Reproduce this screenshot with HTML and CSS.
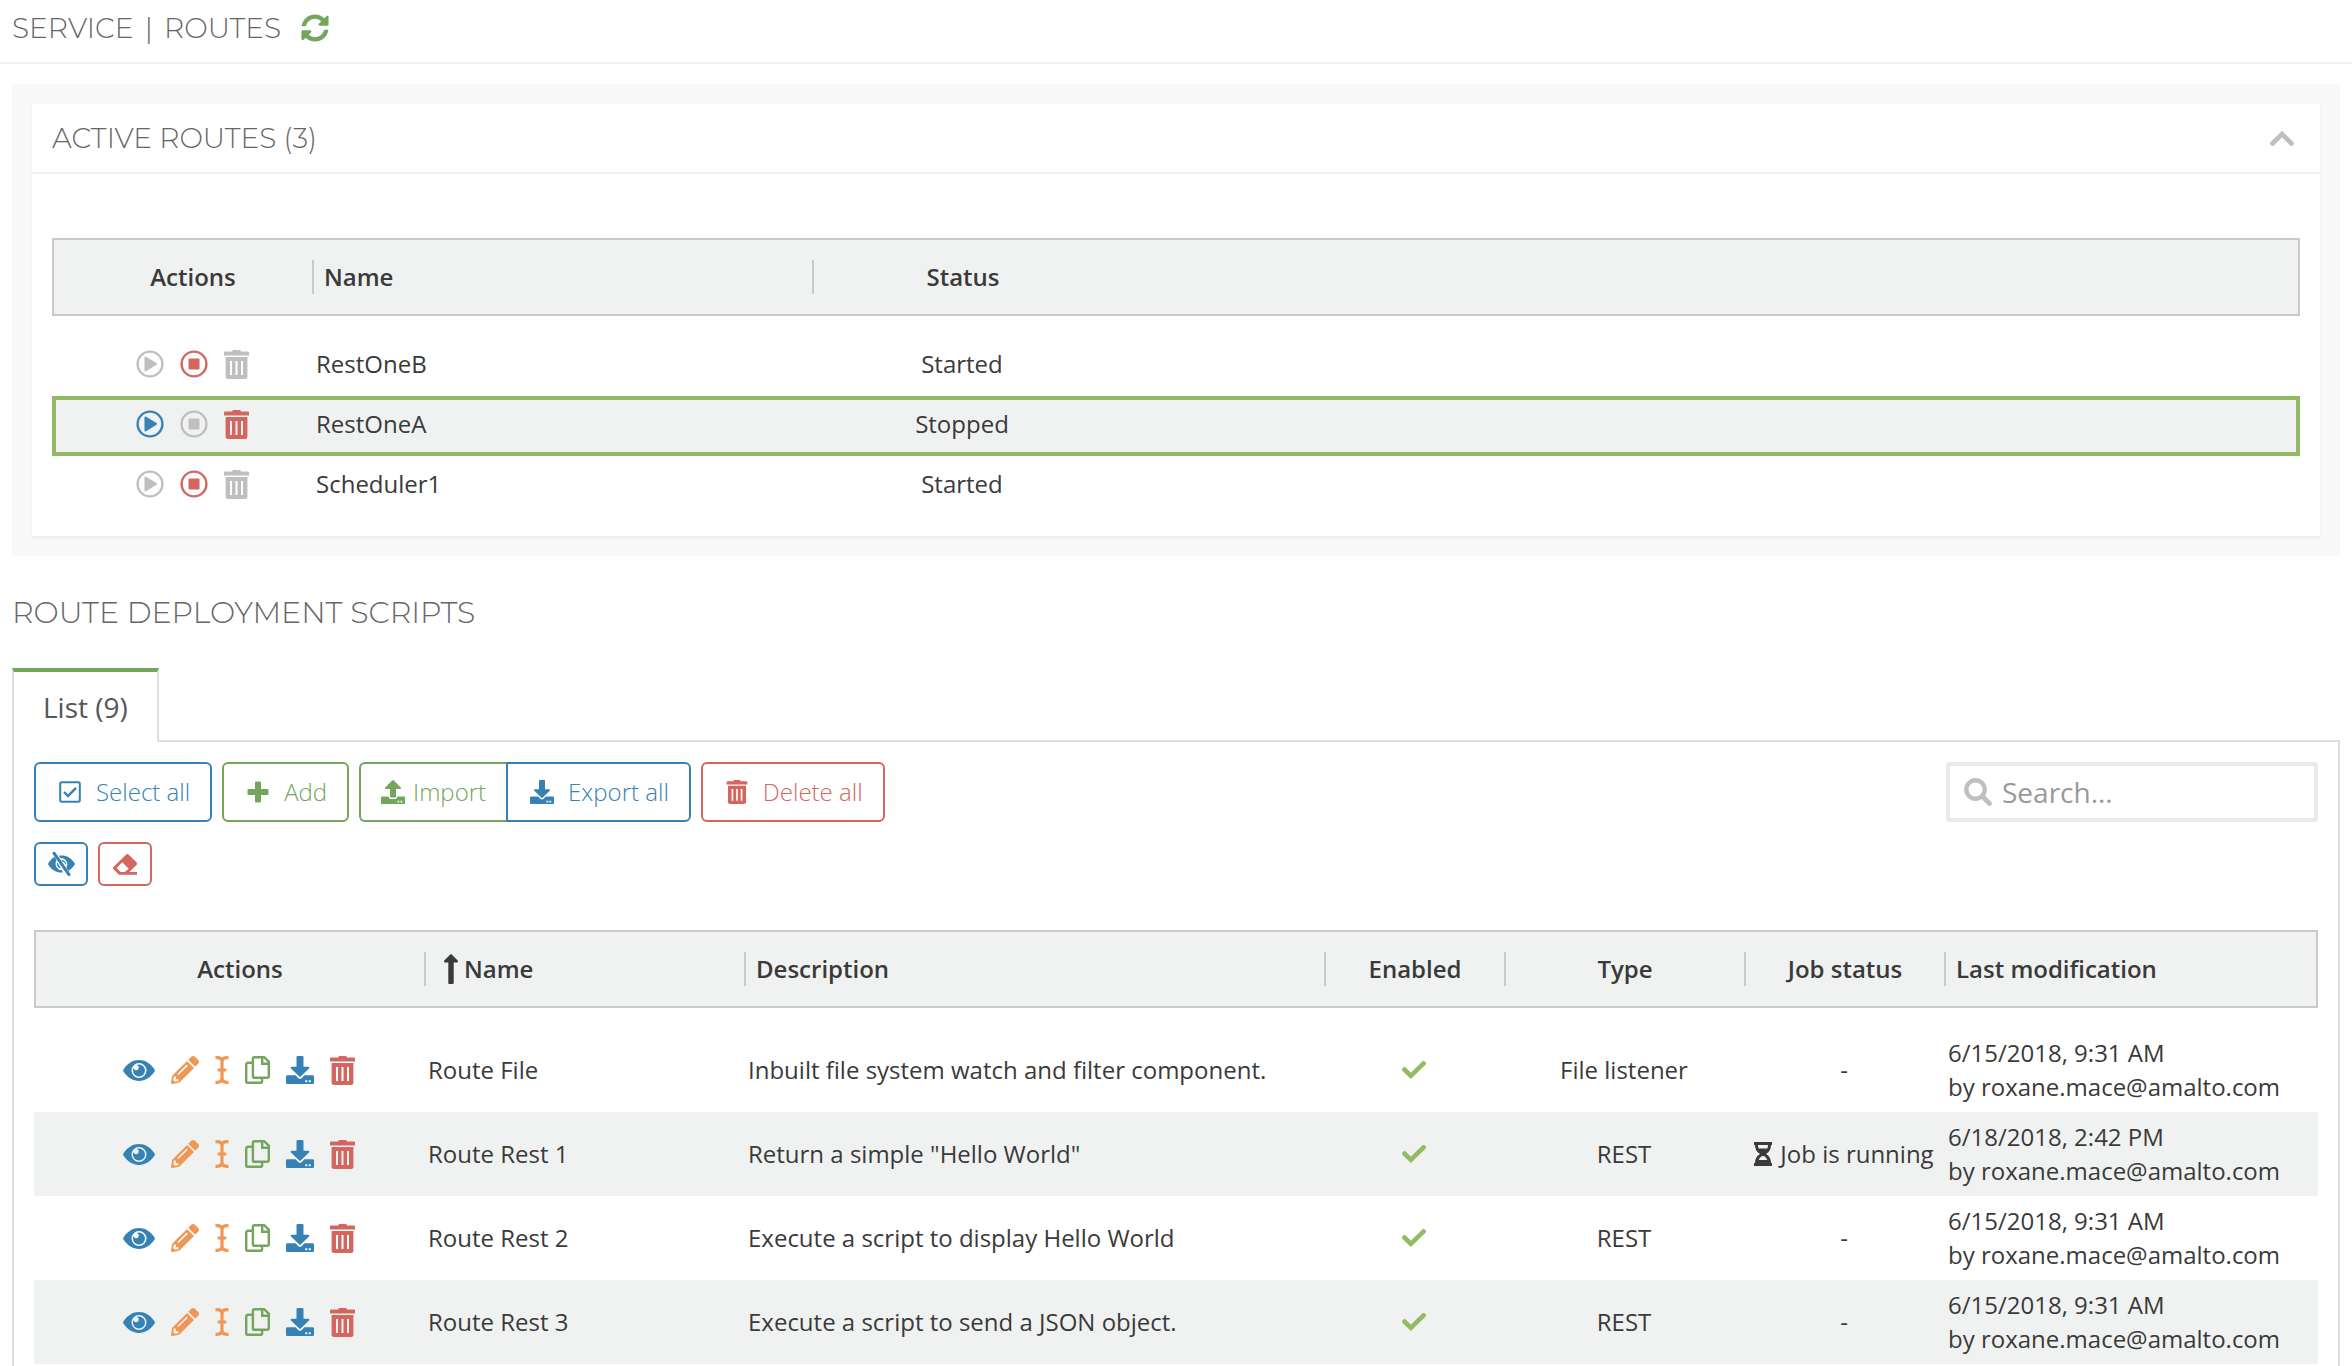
FILE: index.html
```html
<!DOCTYPE html>
<html lang="en">

<head>
    <meta charset="UTF-8">
    <meta name="viewport" content="width=device-width, initial-scale=1.0">
    <title>Service | Routes</title>
    <link rel="stylesheet" href="styles.css">
</head>

<body>
    <!-- Icon sprite -->
    <svg class="sprite" aria-hidden="true">
        <symbol id="refresh" viewBox="0 0 512 512">
            <path d="M370.72 133.28C339.458 104.008 298.888 87.962 255.848 88c-77.458.068-144.328 53.178-162.791 126.85-1.344 5.363-6.122 9.15-11.651 9.15H24.103c-7.498 0-13.194-6.807-11.807-14.176C33.933 94.924 134.813 8 256 8c66.448 0 126.791 26.136 171.315 68.685L463.03 40.97C478.149 25.851 504 36.559 504 57.941V192c0 13.255-10.745 24-24 24H345.941c-21.382 0-32.09-25.851-16.971-40.971l41.75-41.749zM32 296h134.059c21.382 0 32.09 25.851 16.971 40.971l-41.75 41.75c31.262 29.273 71.835 45.319 114.876 45.28 77.418-.07 144.315-53.144 162.787-126.849 1.344-5.363 6.122-9.15 11.651-9.15h57.304c7.498 0 13.194 6.807 11.807 14.176C478.067 417.076 377.187 504 256 504c-66.448 0-126.791-26.136-171.315-68.685L48.97 471.03C33.851 486.149 8 475.441 8 454.059V320c0-13.255 10.745-24 24-24z"/>
        </symbol>
        <symbol id="chevron" viewBox="0 0 24 15">
            <path d="M2.5 12.5 12 3l9.5 9.5" fill="none" stroke="currentColor" stroke-width="4.6" stroke-linecap="round"/>
        </symbol>
        <symbol id="play" viewBox="0 0 28 28">
            <circle cx="14" cy="14" r="12.4" fill="none" stroke="currentColor" stroke-width="2.4"/>
            <path d="M8.500 7.600c0-.9.8-1.300 1.600-.9l10.400 6.400c.7.4.7 1.300 0 1.700L10.100 21.300c-.8.4-1.600 0-1.600-.9z"/>
        </symbol>
        <symbol id="stop" viewBox="0 0 28 28">
            <circle cx="14" cy="14" r="12.4" fill="none" stroke="currentColor" stroke-width="2.4"/>
            <rect x="8.5" y="8.5" width="11" height="11" rx="1"/>
        </symbol>
        <symbol id="trash" viewBox="0 0 25 29">
            <path fill-rule="evenodd" d="M9 0h7l1 1.600h7a1 1 0 0 1 1 1V5.500H0V2.600a1 1 0 0 1 1-1h7zM1.600 7h21.800v19.500a2.500 2.500 0 0 1-2.500 2.500H4.100a2.500 2.500 0 0 1-2.500-2.500zM6 11v14h2V11zm5.500 0v14h2V11zm5.500 0v14h2V11z"/>
        </symbol>
        <symbol id="eye" viewBox="0 0 32 21">
            <path fill-rule="evenodd" d="M.4 9.400C4.600 3.300 9.800 0 16 0s11.400 3.300 15.600 9.400q.6 1.100 0 2.200C27.400 17.700 22.200 21 16 21S4.600 17.700.4 11.600q-.6-1.100 0-2.200zM16 3a7.500 7.500 0 1 0 0 15 7.500 7.500 0 0 0 0-15zm0 1.500a6 6 0 1 1 0 12 6 6 0 0 1-5.400-8.600 2.600 2.600 0 1 0 2.900-2.900A6 6 0 0 1 16 4.500z"/>
        </symbol>
        <symbol id="pencil" viewBox="0 0 512 512">
            <path d="M497.900 142.100l-46.100 46.100c-4.700 4.700-12.300 4.700-17 0l-111-111c-4.700-4.700-4.700-12.300 0-17l46.100-46.100c18.700-18.700 49.100-18.700 67.900 0l60.100 60.100c18.800 18.700 18.800 49.100 0 67.900zM284.200 99.800L21.600 362.400.4 483.900c-2.900 16.400 11.400 30.600 27.800 27.800l121.500-21.300 262.600-262.600c4.700-4.700 4.700-12.300 0-17l-111-111c-4.800-4.700-12.400-4.700-17.100 0zM124.100 339.900c-5.500-5.500-5.500-14.300 0-19.800l154-154c5.500-5.500 14.300-5.500 19.800 0s5.500 14.300 0 19.800l-154 154c-5.500 5.500-14.300 5.500-19.800 0zM88 424h48v36.300l-64.500 11.300-31.100-31.100L51.700 376H88v48z"/>
        </symbol>
        <symbol id="rename" viewBox="0 0 14 28">
            <path d="M.5 1.700h1.500c3 0 5 1.500 5 4v16.600c0 2.500-2 4-5 4H.5M13.500 1.700H12c-3 0-5 1.500-5 4v16.600c0 2.500 2 4 5 4h1.500M2.700 14h8.600" fill="none" stroke="currentColor" stroke-width="3.2"/>
        </symbol>
        <symbol id="copy" viewBox="0 0 25 28">
            <path d="M9.500 1.200h9.700l4.600 4.600v14.400a1.600 1.600 0 0 1-1.600 1.600H9.500a1.600 1.600 0 0 1-1.600-1.600V2.800a1.600 1.600 0 0 1 1.600-1.600zM17.200 1.500v6.300h6.300M7.500 6.800H2.800a1.600 1.600 0 0 0-1.600 1.600v16.800a1.600 1.600 0 0 0 1.600 1.600h12.700a1.600 1.600 0 0 0 1.600-1.600V22" fill="none" stroke="currentColor" stroke-width="2.400"/>
        </symbol>
        <symbol id="download" viewBox="0 0 28 28">
            <path d="M11.500 0h5a1 1 0 0 1 1 1v9.700h4.800c1 0 1.400 1 .7 1.700l-8.300 8.200a1 1 0 0 1-1.400 0L5 12.400c-.7-.7-.3-1.700.7-1.700h4.800V1a1 1 0 0 1 1-1z"/>
            <path fill-rule="evenodd" d="M1.300 19.300h8.200l2.700 2.700a2.600 2.600 0 0 0 3.600 0l2.700-2.700h8.200a1.300 1.300 0 0 1 1.300 1.300v6.100a1.300 1.300 0 0 1-1.300 1.300H1.300A1.300 1.300 0 0 1 0 26.700v-6.100a1.300 1.300 0 0 1 1.300-1.300zM19.300 24.200v2h2v-2zm3.500 0v2h2v-2z"/>
        </symbol>
        <symbol id="upload" viewBox="0 0 28 28">
            <path d="M11.500 20.500h5a1 1 0 0 0 1-1v-9h4.800c1 0 1.400-1 .7-1.700L14.700.4a1 1 0 0 0-1.400 0L5 8.800c-.7.7-.3 1.700.7 1.700h4.800v9a1 1 0 0 0 1 1z"/>
            <path fill-rule="evenodd" d="M1.300 19.300h7.500c.2 1.800 1.300 3 3 3h4.400c1.700 0 2.800-1.200 3-3h7.500a1.300 1.300 0 0 1 1.300 1.300v6.100a1.300 1.300 0 0 1-1.300 1.300H1.300A1.300 1.300 0 0 1 0 26.700v-6.100a1.300 1.300 0 0 1 1.300-1.300zM19.300 24.200v2h2v-2zm3.500 0v2h2v-2z"/>
        </symbol>
        <symbol id="check-square" viewBox="0 0 22 22">
            <rect x="1.200" y="1.200" width="19.600" height="19.600" rx="1.500" fill="none" stroke="currentColor" stroke-width="2"/>
            <path d="M5 11l4 4 8-8.200" fill="none" stroke="currentColor" stroke-width="2.400"/>
        </symbol>
        <symbol id="plus" viewBox="0 0 22 22">
            <path d="M9 .5h4a1 1 0 0 1 1 1V8h6.500a1 1 0 0 1 1 1v4a1 1 0 0 1-1 1H14v6.500a1 1 0 0 1-1 1H9a1 1 0 0 1-1-1V14H1.500a1 1 0 0 1-1-1V9a1 1 0 0 1 1-1H8V1.500a1 1 0 0 1 1-1z"/>
        </symbol>
        <symbol id="eye-slash" viewBox="0 0 27 24">
            <path d="M6.700 4.800C4.200 6.200 2 8.400.3 11.200q-.5.800 0 1.600C3.600 18 8 20.600 13.500 20.600l1.500-.1-1.400-2.400a6.300 6.300 0 0 1-5.100-9.600zM10.200 2.700l2.100 3.400a6.300 6.300 0 0 1 6.100 9.500l1.900 3.200c2.500-1.300 4.700-3.400 6.400-6q.5-.8 0-1.600C23.400 6 19 3.400 13.500 3.400q-1.600 0-2.800.3z"/>
            <path d="M9.200 10.200a4.800 4.800 0 0 0 3.700 6.400zM13.300 7.700l1.400 2.200q1.500-.6 1.700.8l1.500 2.400a4.700 4.700 0 0 0-4.600-5.400z"/>
            <path d="M6 1.200 21 22.600" fill="none" stroke="currentColor" stroke-width="3" stroke-linecap="round"/>
        </symbol>
        <symbol id="eraser" viewBox="0 0 24 21">
            <path fill-rule="evenodd" d="M13 .7a2 2 0 0 1 2.800 0l7.600 7.600a2 2 0 0 1 0 2.800L16.300 18H24v2.700H6.500a2 2 0 0 1-1.400-.6L.6 15.500a2 2 0 0 1 0-2.800zM9.300 8.300l-5.700 5.800L7.500 18h4.300l4-3.300z"/>
        </symbol>
        <symbol id="search" viewBox="0 0 28 28">
            <circle cx="11.500" cy="11.500" r="9.200" fill="none" stroke="currentColor" stroke-width="4.400"/>
            <path d="M18.500 18.500l7 7" stroke="currentColor" stroke-width="4.600" stroke-linecap="round"/>
        </symbol>
        <symbol id="arrow-up" viewBox="0 0 14 30">
            <path d="M6.300.4a1 1 0 0 1 1.400 0L13.700 6.500c.7.9.3 2-.7 2H9.700V29a1 1 0 0 1-1 1H5.300a1 1 0 0 1-1-1V8.500H1c-1 0-1.400-1.100-.7-2z"/>
        </symbol>
        <symbol id="check" viewBox="0 0 24 18">
            <path d="M2.400 8.500l6.500 6.300L21.600 2.400" fill="none" stroke="currentColor" stroke-width="4.600" stroke-linecap="round"/>
        </symbol>
        <symbol id="hourglass" viewBox="0 0 18 24">
            <path fill-rule="evenodd" d="M0 0h18v3h-1c0 4-2 7.500-5 9 3 1.500 5 5 5 9h1v3H0v-3h1c0-4 2-7.500 5-9-3-1.500-5-5-5-9H0zM4 3q0 2 .7 3.500h8.600Q14 5 14 3zM9 14c-2 0-3.500 1.800-4.300 4h8.600C12.500 15.800 11 14 9 14z"/>
        </symbol>
    </svg>

    <header class="page-header">
        <h1>SERVICE <span class="divider">|</span> ROUTES</h1>
        <button type="button" class="icon-btn green" aria-label="Refresh"><svg class="icon-md"><use href="#refresh"/></svg></button>
    </header>

    <main class="content">
        <section class="well">
            <div class="card">
                <div class="card-header">
                    <h2>ACTIVE ROUTES (3)</h2>
                    <button type="button" class="icon-btn grey" aria-label="Collapse"><svg class="icon-chevron"><use href="#chevron"/></svg></button>
                </div>
                <div class="card-body">
                    <table class="grid active-grid">
                        <colgroup>
                            <col class="w-260">
                            <col class="w-500">
                            <col class="w-300">
                            <col>
                        </colgroup>
                        <thead>
                            <tr>
                                <th class="center indent">Actions</th>
                                <th><div class="split">Name</div></th>
                                <th class="center"><div class="split">Status</div></th>
                                <th></th>
                            </tr>
                        </thead>
                        <tbody>
                            <tr>
                                <td class="indent">
                                    <div class="actions">
                                        <button type="button" class="icon-btn grey" aria-label="Start" disabled><svg class="icon-md"><use href="#play"/></svg></button>
                                        <button type="button" class="icon-btn red" aria-label="Stop"><svg class="icon-md"><use href="#stop"/></svg></button>
                                        <button type="button" class="icon-btn grey" aria-label="Delete" disabled><svg class="icon-trash"><use href="#trash"/></svg></button>
                                    </div>
                                </td>
                                <td>RestOneB</td>
                                <td class="center">Started</td>
                                <td></td>
                            </tr>
                            <tr class="selected">
                                <td class="indent">
                                    <div class="actions">
                                        <button type="button" class="icon-btn blue" aria-label="Start"><svg class="icon-md"><use href="#play"/></svg></button>
                                        <button type="button" class="icon-btn grey" aria-label="Stop" disabled><svg class="icon-md"><use href="#stop"/></svg></button>
                                        <button type="button" class="icon-btn red" aria-label="Delete"><svg class="icon-trash"><use href="#trash"/></svg></button>
                                    </div>
                                </td>
                                <td>RestOneA</td>
                                <td class="center">Stopped</td>
                                <td></td>
                            </tr>
                            <tr>
                                <td class="indent">
                                    <div class="actions">
                                        <button type="button" class="icon-btn grey" aria-label="Start" disabled><svg class="icon-md"><use href="#play"/></svg></button>
                                        <button type="button" class="icon-btn red" aria-label="Stop"><svg class="icon-md"><use href="#stop"/></svg></button>
                                        <button type="button" class="icon-btn grey" aria-label="Delete" disabled><svg class="icon-trash"><use href="#trash"/></svg></button>
                                    </div>
                                </td>
                                <td>Scheduler1</td>
                                <td class="center">Started</td>
                                <td></td>
                            </tr>
                        </tbody>
                    </table>
                </div>
            </div>
        </section>

        <h2 class="section-title">ROUTE DEPLOYMENT SCRIPTS</h2>

        <div class="tabs">
            <button type="button" class="tab">List (9)</button>
        </div>

        <section class="panel">
            <div class="toolbar">
                <div class="buttons">
                    <button type="button" class="btn blue"><span class="btn-icon"><svg class="icon-sm"><use href="#check-square"/></svg></span>Select all</button>
                    <button type="button" class="btn green"><span class="btn-icon"><svg class="icon-sm"><use href="#plus"/></svg></span>Add</button>
                    <div class="btn-group">
                        <button type="button" class="btn btn-import green"><span class="btn-icon"><svg class="icon-tray"><use href="#upload"/></svg></span>Import</button>
                        <button type="button" class="btn blue"><span class="btn-icon"><svg class="icon-tray"><use href="#download"/></svg></span>Export all</button>
                    </div>
                    <button type="button" class="btn red"><span class="btn-icon"><svg class="icon-tray"><use href="#trash"/></svg></span>Delete all</button>
                </div>
                <label class="search">
                    <svg class="icon-md"><use href="#search"/></svg>
                    <input type="text" placeholder="Search..." aria-label="Search">
                </label>
            </div>

            <div class="buttons filters">
                <button type="button" class="btn btn-small blue" aria-label="Hide columns"><svg class="icon-slash"><use href="#eye-slash"/></svg></button>
                <button type="button" class="btn btn-small red" aria-label="Clear filters"><svg class="icon-eraser"><use href="#eraser"/></svg></button>
            </div>

            <table class="grid scripts-grid">
                <colgroup>
                    <col class="w-390">
                    <col class="w-320">
                    <col class="w-580">
                    <col class="w-180">
                    <col class="w-240">
                    <col class="w-200">
                    <col>
                </colgroup>
                <thead>
                    <tr>
                        <th class="center indent">Actions</th>
                        <th aria-sort="ascending"><div class="split sorted"><svg class="icon-sort"><use href="#arrow-up"/></svg>Name</div></th>
                        <th><div class="split">Description</div></th>
                        <th class="center"><div class="split">Enabled</div></th>
                        <th class="center"><div class="split">Type</div></th>
                        <th class="center"><div class="split">Job status</div></th>
                        <th><div class="split">Last modification</div></th>
                    </tr>
                </thead>
                <tbody id="scripts"></tbody>
            </table>
        </section>
    </main>

    <script>
        const scripts = [
            { name: 'Route File', description: 'Inbuilt file system watch and filter component.', type: 'File listener', running: false, date: '6/15/2018, 9:31 AM' },
            { name: 'Route Rest 1', description: 'Return a simple "Hello World"', type: 'REST', running: true, date: '6/18/2018, 2:42 PM' },
            { name: 'Route Rest 2', description: 'Execute a script to display Hello World', type: 'REST', running: false, date: '6/15/2018, 9:31 AM' },
            { name: 'Route Rest 3', description: 'Execute a script to send a JSON object.', type: 'REST', running: false, date: '6/15/2018, 9:31 AM' }
        ];

        // icon id, label, colour, size class
        const actions = [
            ['eye', 'View', 'blue', 'icon-eye'],
            ['pencil', 'Edit', 'orange', 'icon-md'],
            ['rename', 'Rename', 'orange', 'icon-rename'],
            ['copy', 'Copy', 'green', 'icon-copy'],
            ['download', 'Export', 'blue', 'icon-md'],
            ['trash', 'Delete', 'red', 'icon-trash']
        ];

        const buttons = actions.map(([id, label, color, size]) =>
            `<button type="button" class="icon-btn ${color}" aria-label="${label}"><svg class="${size}"><use href="#${id}"/></svg></button>`
        ).join('');

        document.getElementById('scripts').innerHTML = scripts.map(item => `
            <tr>
                <td class="indent"><div class="actions">${buttons}</div></td>
                <td>${item.name}</td>
                <td>${item.description}</td>
                <td class="center"><svg class="icon-check"><use href="#check"/></svg></td>
                <td class="center">${item.type}</td>
                <td class="center">${item.running ? '<span class="job"><svg class="icon-job"><use href="#hourglass"/></svg>Job is running</span>' : '-'}</td>
                <td>${item.date}<br>by roxane.mace@amalto.com</td>
            </tr>`).join('');
    </script>
</body>

</html>
```
FILE: styles.css
```css
/* Global Styles */
* {
    box-sizing: border-box;
}

body {
    margin: 0;
    height: 100vh;
    overflow: hidden;
    display: flex;
    flex-direction: column;
    background: #ffffff;
    color: #3a3a3a;
    font-family: 'Open Sans', 'Noto Sans', sans-serif;
    font-size: 24px;
    line-height: 34px;
}

h1, h2 {
    margin: 0;
    color: #666666;
    font-family: 'Montserrat', 'Inter', sans-serif;
    font-size: 28px;
    font-weight: 300;
    line-height: 34px;
}

button, input {
    font-family: inherit;
    font-size: inherit;
    line-height: inherit;
}

svg {
    display: block;
    fill: currentColor;
}

.sprite {
    position: absolute;
    width: 0;
    height: 0;
}

/* Colours */
.blue { color: #3682b5; }
.green { color: #74a55d; }
.red { color: #d4655f; }
.orange { color: #ef9755; }
.grey { color: #bfbfbf; }

/* Icons */
.icon-md { width: 28px; height: 28px; }
.icon-sm { width: 22px; height: 22px; }
.icon-tray { width: 24px; height: 24px; }
.icon-trash { width: 25px; height: 29px; }
.icon-eye { width: 32px; height: 21px; }
.icon-rename { width: 14px; height: 28px; }
.icon-copy { width: 25px; height: 28px; }
.icon-slash { width: 27px; height: 24px; }
.icon-eraser { width: 24px; height: 21px; }
.icon-chevron { width: 24px; height: 15px; }
.icon-sort { width: 14px; height: 30px; }
.icon-job { width: 18px; height: 24px; }

.icon-check {
    width: 24px;
    height: 18px;
    margin: 0 auto;
    color: #93ba64;
}

.icon-btn {
    display: flex;
    padding: 0;
    border: none;
    background: none;
    cursor: pointer;
}

/* Page header */
.page-header {
    display: flex;
    flex-shrink: 0;
    align-items: center;
    gap: 20px;
    height: 64px;
    padding: 0 12px 6px;
    border-bottom: 2px solid #f0f0f7;
}

.divider {
    margin: 0 4px;
}

.content {
    flex: 1;
    display: flex;
    flex-direction: column;
    padding: 20px 12px 0;
}

/* Active routes */
.well {
    padding: 20px;
    background: #f9f9f9;
}

.card {
    background: #ffffff;
    box-shadow: 0 2px 4px rgba(0, 0, 0, 0.06);
}

.card-header {
    display: flex;
    align-items: center;
    justify-content: space-between;
    height: 70px;
    padding: 0 26px 0 20px;
    border-bottom: 2px solid #f0f0f7;
}

.card-body {
    padding: 64px 20px 20px;
}

/* Tables */
.grid {
    width: 100%;
    table-layout: fixed;
    border-collapse: separate;
    border-spacing: 0;
}

.w-180 { width: 180px; }
.w-200 { width: 200px; }
.w-240 { width: 240px; }
.w-260 { width: 260px; }
.w-300 { width: 300px; }
.w-320 { width: 320px; }
.w-390 { width: 390px; }
.w-500 { width: 500px; }
.w-580 { width: 580px; }

.grid th {
    height: 78px;
    padding: 0;
    background: #f0f2f1;
    border: 2px solid #cacaca;
    border-width: 2px 0;
    font-weight: 600;
    text-align: left;
}

.grid th:first-child {
    border-left-width: 2px;
}

.grid th:last-child {
    border-right-width: 2px;
}

.grid td {
    padding: 0 4px;
    white-space: nowrap;
}

.grid tbody::before {
    content: '';
    display: block;
    height: 20px;
}

.grid .center {
    text-align: center;
}

.grid .indent {
    padding-left: 20px;
    padding-right: 0;
}

.split {
    padding-left: 10px;
    border-left: 2px solid #cacaca;
}

.center .split {
    padding-left: 0;
}

.sorted {
    display: flex;
    align-items: center;
    gap: 6px;
    padding-left: 18px;
}

.actions {
    display: flex;
    align-items: center;
    justify-content: center;
    gap: 16px;
}

.active-grid td {
    height: 60px;
    padding-bottom: 4px;
}

.selected {
    background: #f0f2f1;
    outline: 4px solid #93ba64;
    outline-offset: -4px;
}

.scripts-grid td {
    height: 84px;
}

.scripts-grid tbody tr:nth-child(even) {
    background: #f0f2f1;
}

.job {
    display: flex;
    align-items: center;
    justify-content: center;
    gap: 8px;
}

/* Deployment scripts */
.section-title {
    margin: 40px 0 38px;
    font-size: 30px;
}

.tabs {
    display: flex;
}

.tab {
    position: relative;
    height: 74px;
    margin-bottom: -2px;
    padding: 0 29px;
    background: #ffffff;
    border: 2px solid #dddddd;
    border-top: 4px solid #74a55d;
    border-bottom: none;
    color: #55565a;
    font-size: 28px;
}

.panel {
    flex: 1;
    padding: 20px;
    border: 2px solid #dddddd;
    border-bottom: none;
}

.toolbar {
    display: flex;
    justify-content: space-between;
}

.buttons {
    display: flex;
    gap: 10px;
}

.filters {
    margin: 20px 0 44px;
}

.btn {
    display: flex;
    align-items: center;
    gap: 14px;
    height: 60px;
    padding: 0 20px 0 22px;
    background: #ffffff;
    border: 2px solid currentColor;
    border-radius: 6px;
    font-weight: 300;
    cursor: pointer;
}

.btn-icon {
    display: flex;
    justify-content: center;
    width: 24px;
}

.btn-group {
    display: flex;
}

.btn-group .btn:first-child {
    border-right: none;
    border-radius: 6px 0 0 6px;
}

.btn-group .btn:last-child {
    border-radius: 0 6px 6px 0;
}

.btn-import {
    gap: 8px;
    padding: 0 20px;
}

.btn-small {
    justify-content: center;
    width: 54px;
    height: 44px;
    padding: 0;
}

.search {
    display: flex;
    align-items: center;
    gap: 10px;
    width: 372px;
    height: 60px;
    padding: 0 14px;
    border: 4px solid #e9eaec;
    border-radius: 4px;
    color: #bfbfbf;
}

.search input {
    flex: 1;
    min-width: 0;
    padding: 0;
    border: none;
    outline: none;
    background: none;
    color: #3a3a3a;
    font-size: 28px;
}

.search input::placeholder {
    color: #999999;
}
```
